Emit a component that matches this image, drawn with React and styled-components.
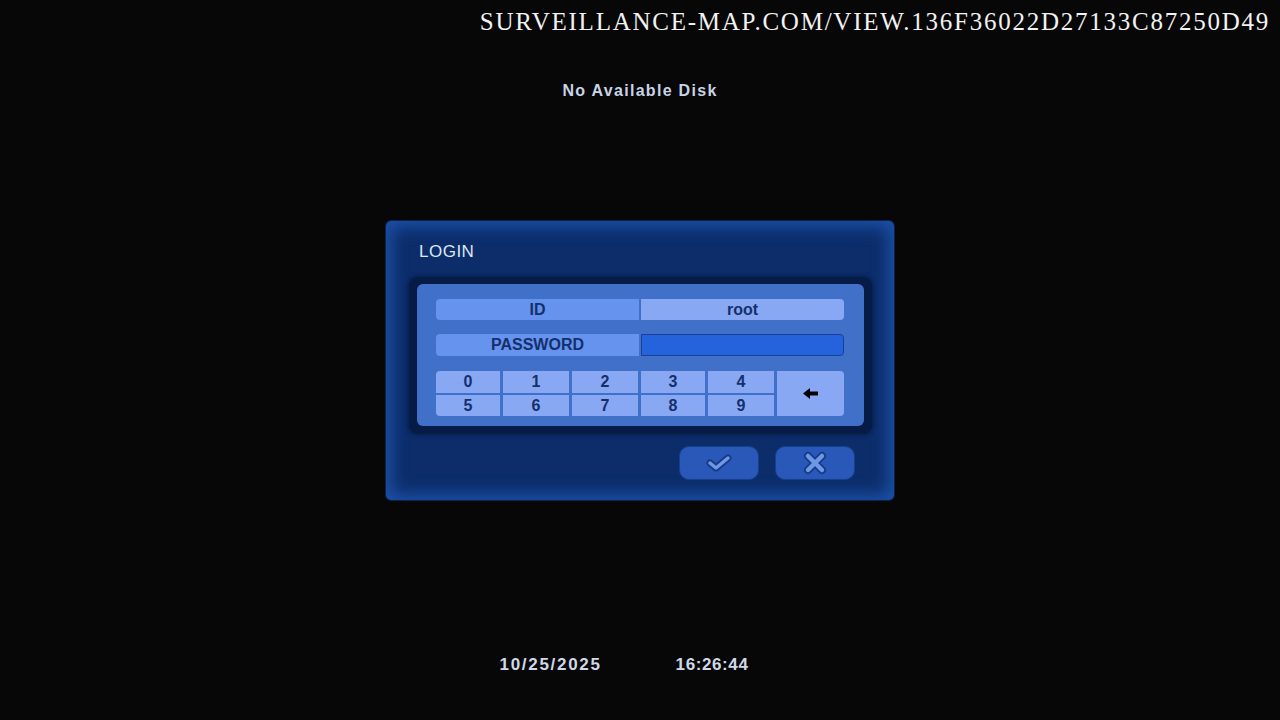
import React from 'react';
import styled, { createGlobalStyle } from 'styled-components';

const GlobalStyle = createGlobalStyle`
  html, body {
    margin: 0;
    padding: 0;
    background: #070707;
  }
  body {
    font-family: "Liberation Sans", Arial, sans-serif;
  }
`;

const Page = styled.div`
  width: 1280px;
  height: 720px;
  background: #070707;
  display: flex;
  flex-direction: column;
  align-items: center;
  overflow: hidden;
`;

const Watermark = styled.div`
  align-self: stretch;
  text-align: right;
  padding-right: 10px;
  height: 44px;
  line-height: 44px;
  font-family: "Liberation Serif", "Times New Roman", serif;
  font-size: 25px;
  letter-spacing: 1.75px;
  color: #f2f2f2;
  text-transform: uppercase;
`;

const Status = styled.div`
  margin-top: 37px;
  line-height: 20px;
  font-size: 16px;
  font-weight: bold;
  letter-spacing: 1.3px;
  color: #c9d3e6;
`;

const Dialog = styled.div`
  margin-top: 119px;
  width: 510px;
  height: 281px;
  box-sizing: border-box;
  border: 1px solid #0a2152;
  border-radius: 6px;
  background: #0c2d6a;
  box-shadow: inset 0 0 16px 6px #1c50a6;
  display: flex;
  flex-direction: column;
  padding: 0 39px 0 23px;
`;

const Title = styled.div`
  margin: 21px 0 0 10px;
  height: 20px;
  line-height: 20px;
  font-size: 17px;
  letter-spacing: 0.5px;
  color: #dfe7f4;
`;

const Frame = styled.div`
  margin-top: 15px;
  width: 463px;
  box-sizing: border-box;
  padding: 7px 8px 8px;
  border-radius: 9px;
  background: #061b46;
  box-shadow: 0 0 4px 1px rgba(4, 18, 52, 0.6);
`;

const Panel = styled.div`
  border-radius: 6px;
  background: #4170c8;
  padding: 15px 20px 10px 19px;
  display: flex;
  flex-direction: column;
`;

const Row = styled.div`
  display: grid;
  grid-template-columns: 1fr 1fr;
  column-gap: 2px;
  height: ${(p) => p.$h}px;
  margin-bottom: ${(p) => p.$mb}px;
`;

const Cell = styled.div`
  display: flex;
  align-items: center;
  justify-content: center;
  font-size: 16px;
  font-weight: bold;
  color: #14306c;
  border-radius: ${(p) => (p.$left ? '4px 0 0 4px' : '0 4px 4px 0')};
  background: ${(p) => p.$bg};
  box-sizing: border-box;
  border: ${(p) => (p.$input ? '1px solid #1a3f98' : 'none')};
`;

const Keypad = styled.div`
  display: grid;
  grid-template-columns: 64px 66px 66px 64px 66px 1fr;
  grid-template-rows: 22px 21px;
  column-gap: 3px;
  row-gap: 2px;
`;

const Key = styled.div`
  display: flex;
  align-items: center;
  justify-content: center;
  background: #88a8f4;
  font-size: 16px;
  font-weight: bold;
  color: #14306c;
  grid-row: ${(p) => (p.$tall ? 'span 2' : 'auto')};
  grid-column: ${(p) => (p.$tall ? '6' : 'auto')};
  border-radius: ${(p) => p.$r || '0'};
`;

const Actions = styled.div`
  margin-top: 12px;
  display: flex;
  justify-content: flex-end;
  gap: 16px;
`;

const ActionButton = styled.div`
  width: 80px;
  height: 34px;
  box-sizing: border-box;
  border-radius: 10px;
  border: 1px solid #16408e;
  background: #2958b8;
  display: flex;
  align-items: center;
  justify-content: center;
`;

const Footer = styled.div`
  margin-top: 154px;
  padding-right: 32px;
  display: flex;
  gap: 74px;
  line-height: 20px;
  font-size: 17px;
  font-weight: bold;
  color: #cfd7e8;
`;

const Stamp = styled.span`
  letter-spacing: ${(p) => p.$ls}px;
`;

const CheckIcon = () => (
  <svg width="26" height="20" viewBox="0 0 26 20">
    <path d="M4 10 L10 15 L22 5" fill="none" stroke="#173a86" strokeWidth="7" strokeLinecap="round" strokeLinejoin="round" />
    <path d="M4 10 L10 15 L22 5" fill="none" stroke="#6c98e6" strokeWidth="3.5" strokeLinecap="round" strokeLinejoin="round" />
  </svg>
);

const CrossIcon = () => (
  <svg width="24" height="24" viewBox="0 0 24 24">
    <path d="M5 5 L19 19 M19 5 L5 19" fill="none" stroke="#173a86" strokeWidth="8" strokeLinecap="round" />
    <path d="M5 5 L19 19 M19 5 L5 19" fill="none" stroke="#6c98e6" strokeWidth="4.5" strokeLinecap="round" />
  </svg>
);

const BackIcon = () => (
  <svg width="16" height="11" viewBox="0 0 16 11">
    <path d="M0 5.5 L7 0 L7 3.5 L15 3.5 L15 7.5 L7 7.5 L7 11 Z" fill="#050505" />
  </svg>
);

const digits = ['0', '1', '2', '3', '4', '5', '6', '7', '8', '9'];

function keyRadius(i) {
  if (i === 0) return '4px 0 0 0';
  if (i === 5) return '0 0 0 4px';
  return '0';
}

export default function App() {
  return (
    <Page>
      <GlobalStyle />
      <Watermark>surveillance-map.com/view.136f36022d27133c87250d49</Watermark>
      <Status>No Available Disk</Status>
      <Dialog>
        <Title>LOGIN</Title>
        <Frame>
          <Panel>
            <Row $h={21} $mb={14}>
              <Cell $left $bg="#6593ee">ID</Cell>
              <Cell $bg="#88a8f4">root</Cell>
            </Row>
            <Row $h={22} $mb={15}>
              <Cell $left $bg="#6593ee">PASSWORD</Cell>
              <Cell $input $bg="#2563dc" />
            </Row>
            <Keypad>
              {digits.slice(0, 5).map((d, i) => (
                <Key key={d} $r={keyRadius(i)}>{d}</Key>
              ))}
              <Key $tall $r="0 4px 4px 0">
                <BackIcon />
              </Key>
              {digits.slice(5).map((d, i) => (
                <Key key={d} $r={keyRadius(i + 5)}>{d}</Key>
              ))}
            </Keypad>
          </Panel>
        </Frame>
        <Actions>
          <ActionButton>
            <CheckIcon />
          </ActionButton>
          <ActionButton>
            <CrossIcon />
          </ActionButton>
        </Actions>
      </Dialog>
      <Footer>
        <Stamp $ls={1.7}>10/25/2025</Stamp>
        <Stamp $ls={0.6}>16:26:44</Stamp>
      </Footer>
    </Page>
  );
}
